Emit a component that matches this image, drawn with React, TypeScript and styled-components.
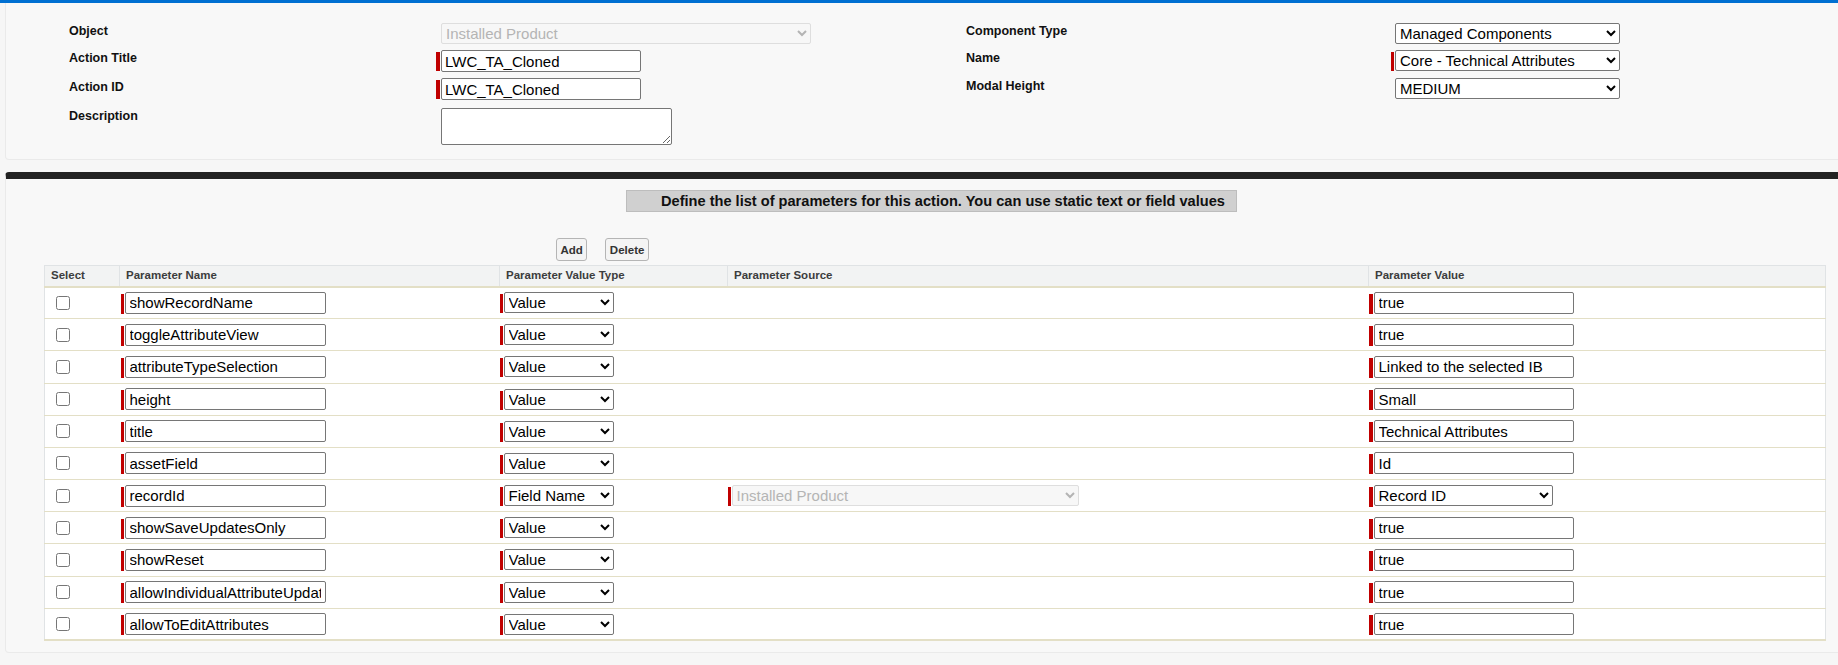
import styled, { createGlobalStyle } from "styled-components";

const GlobalStyle = createGlobalStyle`
  html, body {
    margin: 0;
    padding: 0;
    background: #f8f8f8;
    overflow: hidden;
  }
  body {
    font-family: "Liberation Sans", Arial, sans-serif;
    color: #000;
  }
`;

const Page = styled.div`
  width: 1838px;
  height: 665px;
  overflow: hidden;
  border-top: 3px solid #0070d2;
  box-sizing: border-box;
  padding-left: 5px;
  background: #f6f6f6;
`;

const TopPanel = styled.div`
  width: 1850px;
  height: 157px;
  box-sizing: border-box;
  background: #f8f8f8;
  border: 1px solid #eaeaea;
  border-top: 0;
  border-radius: 0 0 4px 4px;
  padding: 20px 0 0 63px;
`;

const FormGrid = styled.div`
  display: grid;
  grid-template-columns: 367px 530px 425px 1fr;
  grid-template-rows: 27px 29px 29px 40px;
`;

const Label = styled.div<{ $up?: number }>`
  font-size: 12.5px;
  font-weight: bold;
  line-height: 15px;
  color: #111;
  padding-top: 1px;
  margin-top: ${props => props.$up ? -props.$up : 0}px;
`;

const Field = styled.div<{ $up?: number }>`
  display: flex;
  align-items: flex-start;
  margin-top: ${props => props.$up ? -props.$up : 0}px;
`;

const Mark = styled.span<{ $w: number; $h: number; $left: number }>`
  flex: none;
  width: ${props => props.$w}px;
  height: ${props => props.$h}px;
  margin: 2px 1px 0 ${props => props.$left}px;
  background: #c00000;
`;

const TextInput = styled.input<{ $w: number }>`
  box-sizing: border-box;
  width: ${props => props.$w}px;
  height: 22px;
  padding: 0 3px;
  font-family: "Liberation Sans", Arial, sans-serif;
  font-size: 15px;
  color: #000;
  background: #fff;
  border: 1px solid #767676;
  border-radius: 2px;
  outline: 0;
`;

const RowInput = styled(TextInput)`
  padding: 0 4px;
`;

const TextArea = styled.textarea`
  box-sizing: border-box;
  display: block;
  width: 231px;
  height: 37px;
  margin-left: 5px;
  background: #fff;
  border: 1px solid #767676;
  border-radius: 2px;
`;

const Select = styled.select<{ $w: number; $left?: number }>`
  box-sizing: border-box;
  width: ${props => props.$w}px;
  height: 21px;
  margin-left: ${props => props.$left || 0}px;
  padding: 0;
  font-family: "Liberation Sans", Arial, sans-serif;
  font-size: 15px;
  color: #000;
  background: #fff;
  border: 1px solid #767676;
  border-radius: 2px;
  &:disabled {
    color: #b4b4b4;
    background: #f7f7f7;
    border-color: #dedede;
    opacity: 1;
  }
`;

const BottomPanel = styled.div`
  width: 1850px;
  height: 481px;
  margin-top: 12px;
  box-sizing: border-box;
  background: #f8f8f8;
  border: 1px solid #eaeaea;
  border-top: 7px solid #222;
  border-radius: 4px;
`;

const Banner = styled.div`
  box-sizing: border-box;
  width: 611px;
  height: 22px;
  margin: 11px 0 0 620px;
  padding-left: 34px;
  background: #d0d0d0;
  border: 1px solid #bdbdbd;
  font-size: 14.6px;
  font-weight: bold;
  line-height: 20px;
  color: #111;
  white-space: nowrap;
`;

const Toolbar = styled.div`
  display: flex;
  gap: 18px;
  margin: 26px 0 4px 550px;
`;

const Button = styled.button`
  box-sizing: border-box;
  height: 23px;
  padding: 0 3.5px;
  font-family: "Liberation Sans", Arial, sans-serif;
  font-size: 11.5px;
  font-weight: bold;
  color: #333;
  background: #f4f4f4;
  border: 1px solid #b5b5b5;
  border-radius: 3px;
`;

const Table = styled.table`
  width: 1782px;
  margin-left: 38px;
  border-collapse: collapse;
  table-layout: fixed;
  background: #fff;
  border: 1px solid #e0e3e5;
  border-bottom: 2px solid #e3dfc6;
`;

const HeadCell = styled.th`
  height: 21px;
  padding: 0 0 1px 6px;
  box-sizing: border-box;
  text-align: left;
  font-size: 11.5px;
  font-weight: bold;
  color: #3c3d3e;
  background: #f2f3f3;
  border-left: 1px solid #e0e3e5;
  border-bottom: 2px solid #e3dfc6;
  &:first-child {
    border-left: 0;
  }
`;

const Row = styled.tr`
  height: 32.18px;
  &:not(:last-child) td {
    border-bottom: 1px solid #e3dfc6;
  }
`;

const Cell = styled.td`
  padding: 0;
  vertical-align: middle;
`;

const CheckCell = styled(Cell)`
  padding-left: 11px;
`;

const CheckBox = styled.input`
  display: block;
  width: 14px;
  height: 14px;
  margin: 0;
`;

type Param = {
  name: string;
  value: string;
  field?: boolean;
};

const params: Param[] = [
  { name: "showRecordName", value: "true" },
  { name: "toggleAttributeView", value: "true" },
  { name: "attributeTypeSelection", value: "Linked to the selected IB" },
  { name: "height", value: "Small" },
  { name: "title", value: "Technical Attributes" },
  { name: "assetField", value: "Id" },
  { name: "recordId", value: "Record ID", field: true },
  { name: "showSaveUpdatesOnly", value: "true" },
  { name: "showReset", value: "true" },
  { name: "allowIndividualAttributeUpdates", value: "true" },
  { name: "allowToEditAttributes", value: "true" },
];

const App = () => {
  return (
    <Page>
      <GlobalStyle />
      <TopPanel>
        <FormGrid>
          <Label>Object</Label>
          <Field>
            <Select $w={370} $left={5} disabled defaultValue="Installed Product">
              <option>Installed Product</option>
            </Select>
          </Field>
          <Label>Component Type</Label>
          <Field>
            <Select $w={225} $left={4} defaultValue="Managed Components">
              <option>Managed Components</option>
            </Select>
          </Field>

          <Label>Action Title</Label>
          <Field>
            <Mark $w={4} $h={19} $left={0} />
            <TextInput $w={200} defaultValue="LWC_TA_Cloned" />
          </Field>
          <Label>Name</Label>
          <Field>
            <Mark $w={3} $h={19} $left={0} />
            <Select $w={225} defaultValue="Core - Technical Attributes">
              <option>Core - Technical Attributes</option>
            </Select>
          </Field>

          <Label>Action ID</Label>
          <Field $up={1}>
            <Mark $w={4} $h={19} $left={0} />
            <TextInput $w={200} defaultValue="LWC_TA_Cloned" />
          </Field>
          <Label $up={1}>Modal Height</Label>
          <Field $up={1}>
            <Select $w={225} $left={4} defaultValue="MEDIUM">
              <option>MEDIUM</option>
            </Select>
          </Field>

          <Label>Description</Label>
          <Field>
            <TextArea />
          </Field>
        </FormGrid>
      </TopPanel>

      <BottomPanel>
        <Banner>Define the list of parameters for this action. You can use static text or field values</Banner>
        <Toolbar>
          <Button>Add</Button>
          <Button>Delete</Button>
        </Toolbar>
        <Table>
          <colgroup>
            <col width={75} />
            <col width={380} />
            <col width={228} />
            <col width={641} />
            <col />
          </colgroup>
          <thead>
            <tr>
              <HeadCell>Select</HeadCell>
              <HeadCell>Parameter Name</HeadCell>
              <HeadCell>Parameter Value Type</HeadCell>
              <HeadCell>Parameter Source</HeadCell>
              <HeadCell>Parameter Value</HeadCell>
            </tr>
          </thead>
          <tbody>
            {params.map(p => (
              <Row key={p.name}>
                <CheckCell>
                  <CheckBox type="checkbox" />
                </CheckCell>
                <Cell>
                  <Field>
                    <Mark $w={3} $h={20} $left={1} />
                    <RowInput $w={201} defaultValue={p.name} />
                  </Field>
                </Cell>
                <Cell>
                  <Field>
                    <Mark $w={3} $h={19} $left={0} />
                    <Select $w={110} defaultValue={p.field ? "Field Name" : "Value"}>
                      <option>Value</option>
                      <option>Field Name</option>
                    </Select>
                  </Field>
                </Cell>
                <Cell>
                  {p.field && (
                    <Field>
                      <Mark $w={3} $h={19} $left={0} />
                      <Select $w={347} disabled defaultValue="Installed Product">
                        <option>Installed Product</option>
                      </Select>
                    </Field>
                  )}
                </Cell>
                <Cell>
                  <Field>
                    <Mark $w={4} $h={20} $left={0} />
                    {p.field ? (
                      <Select $w={179} defaultValue={p.value}>
                        <option>{p.value}</option>
                      </Select>
                    ) : (
                      <RowInput $w={200} defaultValue={p.value} />
                    )}
                  </Field>
                </Cell>
              </Row>
            ))}
          </tbody>
        </Table>
      </BottomPanel>
    </Page>
  );
};

export default App;
